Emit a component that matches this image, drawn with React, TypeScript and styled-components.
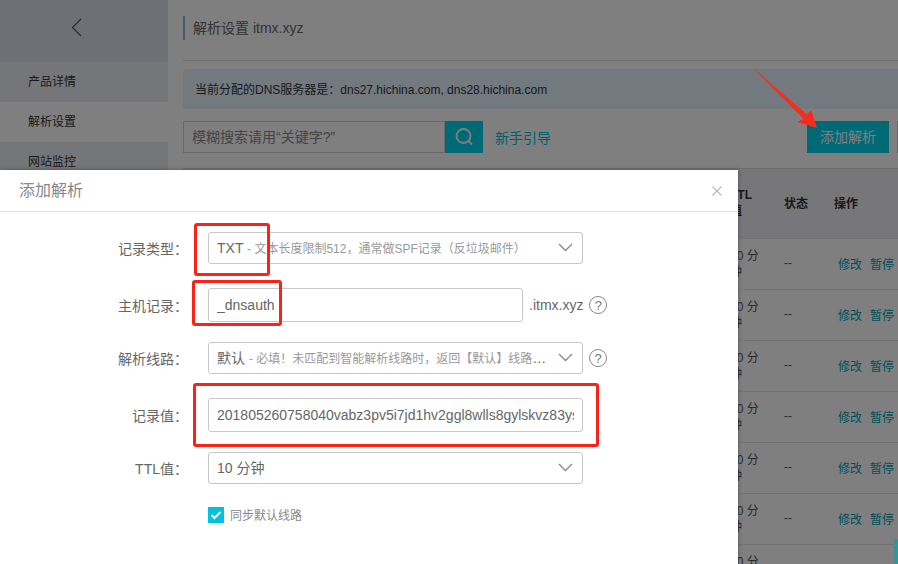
import { createGlobalStyle } from "styled-components";
import styled from "styled-components";

const GlobalStyle = createGlobalStyle`
  html, body {
    margin: 0;
    padding: 0;
    background: #fff;
    overflow: hidden;
  }
  body {
    font-family: "Liberation Sans", "Noto Sans CJK SC", sans-serif;
  }
`;

const Page = styled.div`
  position: relative;
  display: flex;
  width: 898px;
  height: 564px;
  overflow: hidden;
  font-size: 12px;
  color: #333;
`;

// 背景页面
const Sidebar = styled.aside`
  flex: 0 0 168px;
  background: #eaedf3;
`;

const BackBox = styled.div`
  display: flex;
  align-items: center;
  justify-content: center;
  height: 62px;
  padding: 0 16px 7px 0;
  box-sizing: border-box;
  background: #dee0ea;
  color: #555;
`;

const NavItem = styled.div<{ $active?: boolean }>`
  height: 40px;
  line-height: 41px;
  padding-left: 28px;
  font-size: 12px;
  color: #333;
  background: ${(p) => (p.$active ? "#fff" : "#eaedf3")};
`;

const Main = styled.main`
  flex: 1;
  padding-left: 15px;
  min-width: 0;
`;

const TitleBar = styled.div`
  height: 44px;
  padding-top: 16px;
  border-bottom: 1px solid #ddd;
`;

const Title = styled.h2`
  margin: 0;
  height: 24px;
  line-height: 24px;
  padding-left: 8px;
  border-left: 2px solid #88b7e0;
  font-size: 14px;
  font-weight: normal;
  color: #666;
`;

const Notice = styled.div`
  margin-top: 8px;
  height: 40px;
  line-height: 42px;
  padding-left: 12px;
  border-radius: 4px 0 0 4px;
  background: #e4f3ff;
  font-size: 12px;
  color: #333;
`;

const Toolbar = styled.div`
  display: flex;
  align-items: center;
  margin-top: 12px;
  height: 32px;
`;

const SearchInput = styled.div`
  box-sizing: border-box;
  width: 262px;
  height: 32px;
  line-height: 30px;
  padding-left: 8px;
  border: 1px solid #d0d0d0;
  font-size: 14px;
  color: #888;
`;

const SearchButton = styled.div`
  display: flex;
  align-items: center;
  justify-content: center;
  width: 38px;
  height: 32px;
  background: #00d2ec;
  color: #fff;
`;

const GuideLink = styled.span`
  margin-left: 12px;
  font-size: 14px;
  color: #00c1de;
`;

const AddButton = styled.div`
  margin-left: auto;
  width: 82px;
  height: 32px;
  line-height: 32px;
  text-align: center;
  background: #00d2ec;
  font-size: 14px;
  color: #fff;
`;

const GhostButton = styled.div`
  margin-left: 8px;
  width: 1px;
  height: 32px;
  background: #ccc;
`;

const TableHead = styled.div`
  display: grid;
  grid-template-columns: 547px 54px 50px 1fr;
  align-items: center;
  margin-top: 15px;
  height: 67px;
  padding-bottom: 2px;
  border-top: 1px solid #ddd;
  background: #eeeef4;
  font-size: 12px;
  font-weight: bold;
  color: #333;
`;

const TableRow = styled.div`
  display: grid;
  grid-template-columns: 547px 54px 50px 1fr;
  align-items: center;
  box-sizing: border-box;
  height: 51px;
  border-top: 1px solid #e4e4e4;
  font-size: 12px;
  color: #555;
`;

const TtlCell = styled.div`
  grid-column: 2;
  width: 34px;
  line-height: 16px;
`;

const EmptyCell = styled.span`
  padding-bottom: 2px;
`;

const Actions = styled.div`
  display: flex;
  gap: 8px;
  padding: 0 0 2px 4px;
  color: #00a0b8;
`;

const Mask = styled.div`
  position: absolute;
  inset: 0;
  background: rgba(0, 0, 0, 0.5);
`;

const CornerTab = styled.div`
  position: absolute;
  right: 0;
  bottom: 0;
  width: 4px;
  height: 25px;
  background: #3c9199;
`;

// 弹窗
const Modal = styled.div`
  position: absolute;
  left: 0;
  top: 170px;
  width: 738px;
  height: 394px;
  background: #fff;
  box-shadow: 0 0 4px rgba(0, 0, 0, 0.35);
`;

const ModalHeader = styled.div`
  display: flex;
  align-items: center;
  justify-content: space-between;
  height: 41px;
  padding: 0 16px 0 19px;
  border-bottom: 1px solid #e1e1e1;
`;

const ModalTitle = styled.h3`
  margin: 0 0 3px;
  font-size: 16px;
  font-weight: normal;
  color: #888;
`;

const CloseIcon = styled.svg`
  width: 10px;
  height: 10px;
  stroke: #bbb;
  stroke-width: 1.2;
  fill: none;
`;

const Form = styled.div`
  display: flex;
  flex-direction: column;
  gap: 20px;
  padding-top: 20px;
`;

const Row = styled.div<{ $input?: boolean }>`
  display: flex;
  align-items: center;
  margin-top: ${(p) => (p.$input ? "4px" : "0")};
`;

const Label = styled.label`
  flex: 0 0 188px;
  margin-right: 20px;
  padding-bottom: 1px;
  text-align: right;
  font-size: 14px;
  color: #666;
`;

const Select = styled.div`
  position: relative;
  box-sizing: border-box;
  width: 375px;
  height: 32px;
  line-height: 30px;
  padding: 0 26px 0 8px;
  border: 1px solid #c8c8c8;
  border-radius: 3px;
  white-space: nowrap;
  overflow: hidden;
  text-overflow: ellipsis;
  font-size: 14px;
  color: #666;
`;

const Hint = styled.span`
  font-size: 12px;
  color: #999;
`;

const Chevron = styled.svg`
  position: absolute;
  right: 9px;
  top: 10px;
  width: 15px;
  height: 9px;
  fill: none;
  stroke: #888;
  stroke-width: 1.3;
`;

const TextField = styled.input<{ $width: number }>`
  box-sizing: border-box;
  width: ${(p) => p.$width}px;
  height: 34px;
  padding: 0 8px 1px;
  border: 1px solid #c8c8c8;
  border-radius: 3px;
  outline: none;
  background: #fff;
  font-family: inherit;
  font-size: 14px;
  color: #666;
`;

const Suffix = styled.span`
  margin-left: 6px;
  font-size: 14px;
  color: #666;
`;

const HelpIcon = styled.span`
  display: flex;
  align-items: center;
  justify-content: center;
  box-sizing: border-box;
  width: 18px;
  height: 18px;
  margin-left: 6px;
  border: 1.5px solid #888;
  border-radius: 50%;
  font-size: 13px;
  color: #777;
`;

const CheckRow = styled.div`
  display: flex;
  align-items: center;
  gap: 6px;
  margin: 2px 0 0 208px;
  font-size: 12px;
  color: #888;
`;

const CheckBox = styled.span`
  display: flex;
  align-items: center;
  justify-content: center;
  width: 16px;
  height: 16px;
  background: #00c1de;
`;

// 红色标注
const Mark = styled.div<{ $l: number; $t: number; $w: number; $h: number }>`
  position: absolute;
  left: ${(p) => p.$l}px;
  top: ${(p) => p.$t}px;
  width: ${(p) => p.$w}px;
  height: ${(p) => p.$h}px;
  box-sizing: border-box;
  border: 3px solid #f9231a;
  border-radius: 3px;
`;

const Arrow = styled.svg`
  position: absolute;
  left: 750px;
  top: 64px;
  width: 70px;
  height: 66px;
`;

const ttlRows = [0, 1, 2, 3, 4, 5];

const ChevronDown = () => (
  <Chevron viewBox="0 0 15 9">
    <polyline points="1,1 7.5,7.5 14,1" />
  </Chevron>
);

const App = () => {
  return (
    <Page>
      <GlobalStyle />
      <Sidebar>
        <BackBox>
          <svg width="11" height="19" viewBox="0 0 11 19" fill="none" stroke="currentColor" strokeWidth="1.1">
            <polyline points="10,1 1.5,9.5 10,18" />
          </svg>
        </BackBox>
        <NavItem>产品详情</NavItem>
        <NavItem $active>解析设置</NavItem>
        <NavItem>网站监控</NavItem>
      </Sidebar>
      <Main>
        <TitleBar>
          <Title>解析设置 itmx.xyz</Title>
        </TitleBar>
        <Notice>当前分配的DNS服务器是：dns27.hichina.com, dns28.hichina.com</Notice>
        <Toolbar>
          <SearchInput>模糊搜索请用“关键字?”</SearchInput>
          <SearchButton>
            <svg width="20" height="20" viewBox="0 0 20 20" fill="none" stroke="currentColor" strokeWidth="1.8">
              <circle cx="9.5" cy="9" r="7" />
              <line x1="14.5" y1="14" x2="18" y2="17.5" />
            </svg>
          </SearchButton>
          <GuideLink>新手引导</GuideLink>
          <AddButton>添加解析</AddButton>
          <GhostButton />
        </Toolbar>
        <TableHead>
          <TtlCell>TTL 值</TtlCell>
          <span>状态</span>
          <span>操作</span>
        </TableHead>
        {ttlRows.map((row) => (
          <TableRow key={row}>
            <TtlCell>10 分钟</TtlCell>
            <EmptyCell>--</EmptyCell>
            <Actions>
              <span>修改</span>
              <span>暂停</span>
            </Actions>
          </TableRow>
        ))}
        <TableRow>
          <TtlCell>10 分钟</TtlCell>
        </TableRow>
      </Main>
      <Mask />
      <CornerTab />
      <Modal>
        <ModalHeader>
          <ModalTitle>添加解析</ModalTitle>
          <CloseIcon viewBox="0 0 10 10">
            <line x1="0.5" y1="0.5" x2="9.5" y2="9.5" />
            <line x1="9.5" y1="0.5" x2="0.5" y2="9.5" />
          </CloseIcon>
        </ModalHeader>
        <Form>
          <Row>
            <Label>记录类型：</Label>
            <Select>
              TXT <Hint>- 文本长度限制512，通常做SPF记录（反垃圾邮件）</Hint>
              <ChevronDown />
            </Select>
          </Row>
          <Row $input>
            <Label>主机记录：</Label>
            <TextField $width={315} readOnly value="_dnsauth" />
            <Suffix>.itmx.xyz</Suffix>
            <HelpIcon>?</HelpIcon>
          </Row>
          <Row>
            <Label>解析线路：</Label>
            <Select>
              默认 <Hint>- 必填！未匹配到智能解析线路时，返回【默认】线路解析结果</Hint>
              <ChevronDown />
            </Select>
            <HelpIcon>?</HelpIcon>
          </Row>
          <Row $input>
            <Label>记录值：</Label>
            <TextField $width={375} readOnly value="201805260758040vabz3pv5i7jd1hv2ggl8wlls8gylskvz83ys6d" />
          </Row>
          <Row>
            <Label>TTL值：</Label>
            <Select>
              10 分钟
              <ChevronDown />
            </Select>
          </Row>
          <CheckRow>
            <CheckBox>
              <svg width="12" height="10" viewBox="0 0 12 10" fill="none" stroke="#fff" strokeWidth="2">
                <polyline points="1.5,5 4.5,8 10.5,2" />
              </svg>
            </CheckBox>
            同步默认线路
          </CheckRow>
        </Form>
      </Modal>
      <Mark $l={194} $t={223} $w={76} $h={53} />
      <Mark $l={192} $t={280} $w={90} $h={46} />
      <Mark $l={193} $t={383} $w={406} $h={64} />
      <Arrow viewBox="750 64 70 66">
        <polygon points="752,67 807,114.5 811,110 817,128 797,122 803.5,119" fill="#fb2a1c" />
      </Arrow>
    </Page>
  );
};

export default App;
